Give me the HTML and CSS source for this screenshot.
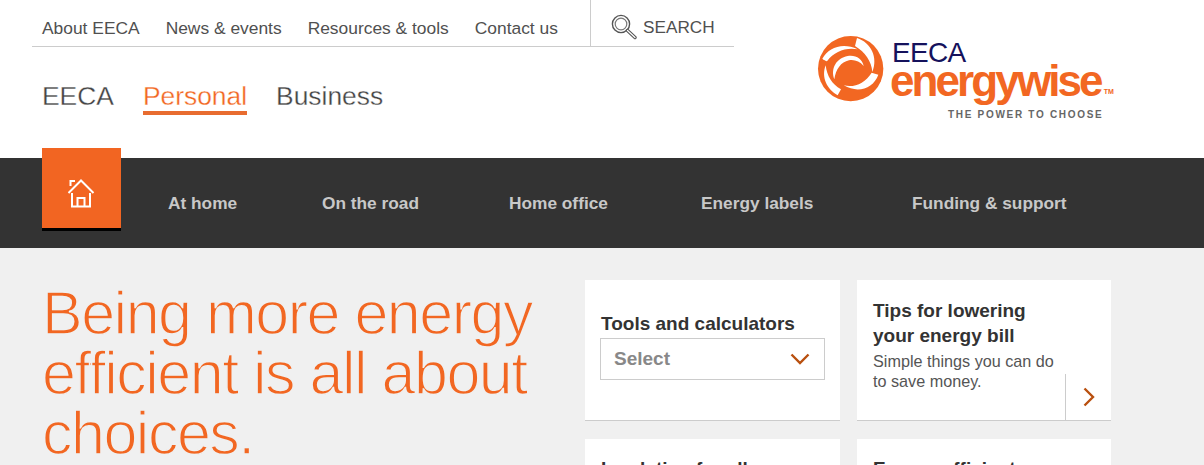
FILE: index.html
```html
<!DOCTYPE html>
<html lang="en">
<head>
<meta charset="UTF-8" />
<meta name="viewport" content="width=device-width, initial-scale=1" />
<title>EECA Energywise - Personal</title>
<link rel="stylesheet" href="styles.css">
</head>
<body>
  <header class="site-header">
    <div class="header-left">
      <nav class="top-nav" aria-label="Site links">
        <ul class="top-links">
          <li><a href="#">About EECA</a></li>
          <li><a href="#">News &amp; events</a></li>
          <li><a href="#">Resources &amp; tools</a></li>
          <li><a href="#">Contact us</a></li>
        </ul>
        <a class="search-link" href="#">
          <svg class="search-icon" viewBox="0 0 26 26" width="26" height="26" aria-hidden="true">
            <circle cx="10" cy="10" r="8.6" fill="none" stroke="#555" stroke-width="1.4"/>
            <circle cx="10" cy="10" r="5.8" fill="none" stroke="#777" stroke-width="1.2"/>
            <path d="M16.5 16.5l7.5 7" fill="none" stroke="#555" stroke-width="3.4" stroke-linecap="round"/>
            <path d="M16.5 16.5l7.5 7" fill="none" stroke="#fff" stroke-width="1.2" stroke-linecap="round"/>
          </svg>
          SEARCH
        </a>
      </nav>
      <nav class="section-tabs" aria-label="Sections">
        <a href="#">EECA</a>
        <a href="#" class="active">Personal</a>
        <a href="#">Business</a>
      </nav>
    </div>
    <a class="logo" href="#" aria-label="EECA energywise">
      <svg class="logo-swirl" viewBox="0 0 240 228" width="80" height="76" aria-hidden="true">
        <circle cx="107" cy="110" r="98" fill="#f26722"/>
        <path d="M22 80C40 46 84 30 128 52C92 46 58 58 36 88C32 86 26 84 22 80Z" fill="#fff"/>
        <path d="M126 18C168 32 190 76 172 120C170 88 150 60 120 42C122 34 124 26 126 18Z" fill="#fff"/>
        <path d="M190 128C176 168 130 186 86 160C118 168 150 154 170 122C176 124 184 126 190 128Z" fill="#fff"/>
        <path d="M68 190C36 172 18 136 32 100C36 132 50 156 78 172C74 178 72 184 68 190Z" fill="#fff"/>
        <path d="M58 142C46 110 64 78 98 72C122 68 142 80 146 102C134 88 118 82 102 85C78 90 62 112 58 142Z" fill="#fff"/>
      </svg>
      <div class="logo-words">
        <span class="logo-eeca">EECA</span>
        <span class="logo-energy">energywise<sup>TM</sup></span>
        <span class="logo-tag">THE POWER TO CHOOSE</span>
      </div>
    </a>
  </header>

  <nav class="main-nav" aria-label="Main">
    <a class="home-tab" href="#" aria-label="Home">
      <svg viewBox="0 0 28 30" width="28" height="30" aria-hidden="true">
        <path d="M1.5 15L14 2.5L26.5 15M5 15V28.5H23V15M10.5 28.5V20H17.5V28.5M3.5 8V3H8" fill="none" stroke="#fff" stroke-width="2"/>
      </svg>
    </a>
    <ul class="main-links">
      <li><a href="#">At home</a></li>
      <li><a href="#">On the road</a></li>
      <li><a href="#">Home office</a></li>
      <li><a href="#">Energy labels</a></li>
      <li><a href="#">Funding &amp; support</a></li>
    </ul>
  </nav>

  <main class="content">
    <h1 class="intro">Being more energy efficient is all about choices.</h1>
    <div class="cards">
      <div class="card">
        <h3 class="tools-title">Tools and calculators</h3>
        <div class="select-box">
          <span>Select</span>
          <svg viewBox="0 0 20 12" width="20" height="12" aria-hidden="true">
            <path d="M1.5 1.5L10 10L18.5 1.5" fill="none" stroke="#b9500f" stroke-width="2.4"/>
          </svg>
        </div>
      </div>
      <div class="card">
        <h3>Tips for lowering your energy bill</h3>
        <p>Simple things you can do to save money.</p>
        <a class="card-arrow" href="#" aria-label="More">
          <svg viewBox="0 0 12 20" width="12" height="20" aria-hidden="true">
            <path d="M1.5 1.5L10 10L1.5 18.5" fill="none" stroke="#b9500f" stroke-width="2.4"/>
          </svg>
        </a>
      </div>
      <div class="card card-low">
        <h3>Insulation for all</h3>
      </div>
      <div class="card card-low">
        <h3>Energy efficient</h3>
      </div>
    </div>
  </main>
</body>
</html>
```

FILE: styles.css
```css
* {
  box-sizing: border-box;
}
html, body {
  height: 465px;
  overflow: hidden;
}
body {
  margin: 0;
  font-family: "Liberation Sans", Arial, sans-serif;
  background-color: #fff;
  color: #444;
}
a {
  color: inherit;
  text-decoration: none;
}
ul {
  list-style: none;
  margin: 0;
  padding: 0;
}

/* header */
.site-header {
  height: 158px;
  padding-left: 32px;
  display: flex;
  background-color: #fff;
}
.header-left {
  width: 702px;
}
.top-nav {
  height: 47px;
  display: flex;
  border-bottom: 1px solid #ccc;
}
.top-links {
  display: flex;
  gap: 26px;
  width: 558px;
  padding: 18px 0 0 10px;
  font-size: 17.4px;
  line-height: 21px;
  color: #505050;
  white-space: nowrap;
}
.search-link {
  display: flex;
  align-items: center;
  gap: 6px;
  padding: 8px 0 0 20px;
  border-left: 1px solid #ccc;
  font-size: 17.2px;
  color: #505050;
}
/* no light weight installed, the stroke thins the big text down */
.section-tabs {
  display: flex;
  gap: 29px;
  padding: 32px 0 0 10px;
  font-size: 26.4px;
  -webkit-text-stroke: 0.3px #fff;
}
.section-tabs a {
  height: 36px;
  line-height: 34px;
}
.section-tabs .active {
  color: #f26722;
  border-bottom: 4px solid #e86c30;
}

/* logo */
.logo {
  margin: 32px 0 0 81px;
  display: flex;
  align-items: flex-start;
}
.logo-swirl {
  flex-shrink: 0;
}
.logo-words {
  display: flex;
  flex-direction: column;
  margin-left: -5px;
}
.logo-eeca {
  color: #15125c;
  font-size: 28px;
  line-height: 26px;
  margin: 8px 0 0 2px;
  letter-spacing: -0.7px;
}
.logo-energy {
  color: #f26722;
  font-size: 44px;
  line-height: 30px;
  font-weight: bold;
  letter-spacing: -2.9px;
  white-space: nowrap;
}
.logo-energy sup {
  font-size: 7px;
  line-height: 0;
  letter-spacing: 0;
  vertical-align: 2px;
  margin-left: 3px;
}
.logo-tag {
  color: #666;
  font-size: 10px;
  font-weight: bold;
  line-height: 12px;
  letter-spacing: 1.7px;
  margin: 13px 0 0 58px;
  white-space: nowrap;
}

/* main nav */
.main-nav {
  height: 90px;
  background-color: #333;
  padding-left: 42px;
  display: flex;
}
.home-tab {
  width: 79px;
  height: 83px;
  margin-top: -10px;
  background-color: #f26522;
  border-bottom: 3px solid #000;
  display: flex;
  align-items: center;
  justify-content: center;
  padding: 10px 2px 0 0;
}
.main-links {
  display: grid;
  grid-template-columns: 154px 187px 192px 211px auto;
  padding: 1px 0 0 47px;
  align-items: center;
  font-size: 17.3px;
  font-weight: bold;
  color: #c8c8c8;
  white-space: nowrap;
}

/* content */
.content {
  height: 217px;
  background-color: #f0f0f0;
  padding: 35px 0 0 42px;
  display: flex;
}
.intro {
  width: 543px;
  flex-shrink: 0;
  margin: 0;
  color: #f26722;
  font-weight: normal;
  font-size: 61px;
  line-height: 60px;
  letter-spacing: -1.5px;
  -webkit-text-stroke: 1.5px #f0f0f0;
}
.cards {
  display: grid;
  grid-template-columns: 255px 254px;
  grid-auto-rows: 141px;
  gap: 18px 17px;
  margin-top: -3px;
}
.card {
  position: relative;
  background-color: #fff;
  border-bottom: 1px solid #ccc;
  padding: 18px 16px;
  color: #333;
}
.card-low {
  padding-top: 17px;
}
.card h3 {
  margin: 0;
  font-size: 19px;
  line-height: 25px;
  font-weight: bold;
  width: 190px;
}
.card .tools-title {
  width: auto;
  margin-top: 13px;
  white-space: nowrap;
}
.card p {
  margin: 3px 0 0;
  font-size: 16.2px;
  line-height: 20px;
  width: 190px;
  color: #555;
}
.select-box {
  height: 42px;
  margin: 2px -1px 0 -1px;
  border: 1px solid #ccc;
  display: flex;
  align-items: center;
  justify-content: space-between;
  padding: 0 14px 0 13px;
  font-size: 19px;
  font-weight: bold;
  color: #888;
}
/* arrow sits over the corner of the card */
.card-arrow {
  position: absolute;
  right: 0;
  bottom: 0;
  width: 46px;
  height: 46px;
  border-left: 1px solid #ccc;
  display: flex;
  align-items: center;
  justify-content: center;
}
```
